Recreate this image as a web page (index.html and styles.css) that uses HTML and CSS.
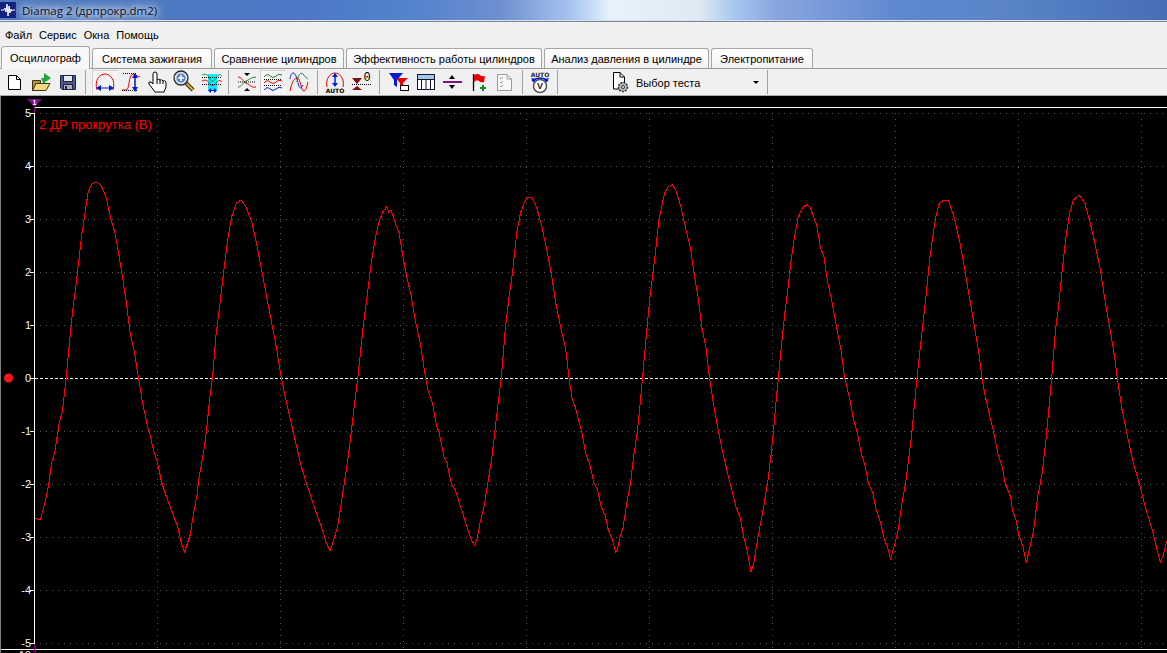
FILE: index.html
```html
<!DOCTYPE html>
<html>
  <head>
    <title>Diamag 2</title>
    <link rel="stylesheet" href="styles.css">
  </head>
  <body>
    <div class="window">
      <div class="titlebar">
        <svg class="app-icon" width="16" height="16" viewBox="0 0 16 16">
          <rect width="16" height="16" fill="#12237c"/>
          <path d="M1 8H4L5 6 6 10 7 2 8 14 9 4 10 11 11 7 12 9 13 8H15" fill="none" stroke="#fff"/>
        </svg>
        <span class="app-title">Diamag 2 (дрпрокр.dm2)</span>
      </div>
      <div class="menu">
        <span>Файл</span>
        <span>Сервис</span>
        <span>Окна</span>
        <span>Помощь</span>
      </div>
      <div class="tabs">
        <div class="tab tab-active">Осциллограф</div>
        <div class="tab">Система зажигания</div>
        <div class="tab">Сравнение цилиндров</div>
        <div class="tab">Эффективность работы цилиндров</div>
        <div class="tab">Анализ давления в цилиндре</div>
        <div class="tab">Электропитание</div>
      </div>
      <div class="toolbar">
        <div class="group group-file">
          <div class="btn btn-wide">
            <svg width="24" height="24" viewBox="0 0 24 24">
              <path d="M6.500 5.500H14.500L18.500 9.500V19.500H6.500Z" fill="#fff" stroke="#000"/>
              <path d="M14.500 5.500V9.500H18.500" fill="none" stroke="#000"/>
            </svg>
          </div>
          <div class="btn btn-wide">
            <svg width="24" height="24" viewBox="0 0 24 24">
              <path d="M3.500 20.500V10.500H11.500V20.500Z" fill="#b59433" stroke="#3c3310"/>
              <path d="M3.500 20.500L7 13.500H21L17 20.500Z" fill="#f2d77c" stroke="#3c3310"/>
              <path d="M15 3L22 8 15 13Z" fill="#23a63b"/>
              <path d="M12 8H16V13H14Z" fill="#23a63b"/>
            </svg>
          </div>
          <div class="btn btn-wide">
            <svg width="24" height="24" viewBox="0 0 24 24">
              <path d="M4.500 5.500H19.500V19.500H6L4.500 18Z" fill="#4c5a86" stroke="#1d2340"/>
              <rect x="7.500" y="5.500" width="9" height="6" fill="#e6e6ee" stroke="#1d2340"/>
              <rect x="7.500" y="14.500" width="9" height="5" fill="#a9adbd" stroke="#1d2340"/>
              <rect x="9" y="16" width="2" height="3" fill="#1d2340"/>
            </svg>
          </div>
        </div>
        <div class="group group-view">
          <div class="btn btn-pressed">
            <svg width="24" height="24" viewBox="0 0 24 24">
              <path d="M4 20C1 10 7 4 12 4S23 10 20 20" fill="none" stroke="#e60000"/>
              <path d="M5 18H19" stroke="#0018d8"/>
              <path d="M8 15L3 18 8 21ZM16 15L21 18 16 21Z" fill="#0018d8"/>
            </svg>
          </div>
          <div class="btn">
            <svg width="24" height="24" viewBox="0 0 24 24">
              <path d="M3 20H7C11 20 9 5 14 4L21 7" fill="none" stroke="#e60000"/>
              <path d="M4 3.500H17M3 20.500H18" stroke="#000" stroke-dasharray="1 1"/>
              <path d="M16 6V18" stroke="#0018d8" stroke-width="1.500"/>
              <path d="M16 3L13 8H19ZM16 22L13 17H19Z" fill="#0018d8"/>
            </svg>
          </div>
          <div class="btn">
            <svg width="24" height="24" viewBox="0 0 24 24">
              <path d="M10 22L4 14Q3 11 6 12L8 14V4Q8 2 10 2T12 4V10Q14 8 15 10 17 9 18 11 20 10 21 12V17L19 22Z" fill="#fff" stroke="#000"/>
              <path d="M12 10V14M15 10V14M18 11V14" stroke="#000"/>
            </svg>
          </div>
          <div class="btn">
            <svg width="24" height="24" viewBox="0 0 24 24">
              <path d="M15 13L22 20" stroke="#3a2f10" stroke-width="4"/>
              <path d="M15.500 13.500L22 20" stroke="#d8ad3c" stroke-width="2"/>
              <circle cx="10" cy="8" r="7" fill="#d8e2f2" stroke="#2a2a2a" stroke-width="1.300"/>
              <circle cx="10" cy="8" r="4.500" fill="#5c80c6"/>
              <path d="M7 8H13M10 5V11" stroke="#fff" stroke-width="1.600"/>
            </svg>
          </div>
          <div class="btn">
            <svg width="24" height="24" viewBox="0 0 24 24">
              <rect x="11" y="4" width="9" height="16" fill="#00f0ff"/>
              <path d="M5 5C9 3 11 5 13 9 14 12 17 12 19 8 21 4 23 4 25 6" fill="none" stroke="#138a2c"/>
              <path d="M5 11C9 9 11 11 13 14 15 17 18 15 20 12 22 10 23 10 25 12" fill="none" stroke="#e60000"/>
              <path d="M5 7.500H25M5 14.500H25" stroke="#000" stroke-dasharray="1 1"/>
              <path d="M12 20.500H19" stroke="#0018d8"/>
              <path d="M14 18L11 20.500 14 23ZM17 18L20 20.500 17 23Z" fill="#0018d8"/>
            </svg>
          </div>
        </div>
        <div class="group group-scope">
          <div class="btn">
            <svg width="24" height="24" viewBox="0 0 24 24">
              <path d="M3 7C7 7 8 12 11 13S16 18 21 17" fill="none" stroke="#e60000"/>
              <path d="M3 17C7 17 8 12 11 11S16 7 21 7" fill="none" stroke="#138a2c"/>
              <path d="M3 12H21" stroke="#000" stroke-dasharray="1 1"/>
              <path d="M9 3H15L12 6ZM9 21H15L12 18Z" fill="#000"/>
            </svg>
          </div>
          <div class="btn btn-pressed">
            <svg width="24" height="24" viewBox="0 0 24 24">
              <path d="M3 7Q6 3 9 6T15 6 21 5" fill="none" stroke="#138a2c"/>
              <path d="M3 13Q6 9 9 12T15 12 21 11" fill="none" stroke="#e60000"/>
              <path d="M3 20Q6 16 9 19T15 19 21 18" fill="none" stroke="#0018d8"/>
              <path d="M3 9.500H21M3 15.500H21" stroke="#000" stroke-dasharray="1 1"/>
            </svg>
          </div>
          <div class="btn">
            <svg width="24" height="24" viewBox="0 0 24 24">
              <path d="M3 9C4 1 8 1 10 9S13 21 16 15" fill="none" stroke="#0018d8"/>
              <path d="M3 21C4 16 6 8 10 8S14 22 17 21 20 14 21 12" fill="none" stroke="#e60000"/>
              <path d="M10 12C11 4 14 2 16 4S19 8 21 9" fill="none" stroke="#138a2c"/>
            </svg>
          </div>
        </div>
        <div class="group group-scale">
          <div class="btn">
            <svg width="24" height="24" viewBox="0 0 24 24">
              <path d="M4 17C2 8 8 3 12 3S22 8 20 17" fill="none" stroke="#e60000"/>
              <path d="M12 6V14" stroke="#0018d8" stroke-width="1.500"/>
              <path d="M12 3L9 7H15ZM12 17L9 13H15Z" fill="#0018d8"/>
              <text class="icon-auto" x="12" y="23">AUTO</text>
            </svg>
          </div>
          <div class="btn">
            <svg width="24" height="24" viewBox="0 0 24 24">
              <path d="M3 8H13L8 14ZM3 20H13L8 16Z" fill="#7a1212"/>
              <path d="M3 14.500H22" stroke="#000" stroke-dasharray="1 1"/>
              <text class="icon-zero" x="18" y="11">0</text>
            </svg>
          </div>
        </div>
        <div class="group group-tools">
          <div class="btn">
            <svg width="24" height="24" viewBox="0 0 24 24">
              <path d="M1 3H15L9 10V17L6 15V10Z" fill="#0018d8"/>
              <path d="M8 8H20L15 13V18L12 16V13Z" fill="#e60000"/>
              <rect x="12.500" y="15.500" width="8" height="5" fill="#fff" stroke="#000"/>
            </svg>
          </div>
          <div class="btn">
            <svg width="24" height="24" viewBox="0 0 24 24">
              <rect x="3.500" y="4.500" width="17" height="15" fill="#fff" stroke="#10142e"/>
              <rect x="4" y="5" width="16" height="4" fill="#a8c6e8"/>
              <path d="M3 9.500H21M7.500 9V19M12 9V19M16.500 9V19" stroke="#10142e"/>
            </svg>
          </div>
          <div class="btn">
            <svg width="24" height="24" viewBox="0 0 24 24">
              <path d="M3 12H22" stroke="#7a1282" stroke-width="2"/>
              <path d="M12 5L9 9H15ZM12 19L9 15H15Z" fill="#000"/>
            </svg>
          </div>
          <div class="btn">
            <svg width="24" height="24" viewBox="0 0 24 24">
              <path d="M7.500 4V21" stroke="#000" stroke-width="1.300"/>
              <path d="M8 5Q12 3 14 5T19 6L18 12Q15 13 13 11T8 12Z" fill="#e60000"/>
              <path d="M17 15V21M14 18H20" stroke="#0b8a2a" stroke-width="2"/>
            </svg>
          </div>
          <div class="btn">
            <svg width="24" height="24" viewBox="0 0 24 24">
              <path d="M5.500 4.500H15L19.500 9V20.500H5.500Z" fill="#f8f8f8" stroke="#9a9a9a"/>
              <path d="M15 4.500V9H19.500" fill="none" stroke="#9a9a9a"/>
              <path d="M8 8L9 9 11 7M8 12L9 13 11 11M8 16L9 17 11 15" fill="none" stroke="#9a9a9a"/>
            </svg>
          </div>
        </div>
        <div class="group group-auto">
          <div class="btn">
            <svg width="24" height="24" viewBox="0 0 24 24">
              <text class="icon-auto icon-auto-top" x="12" y="7">AUTO</text>
              <path d="M4 11Q12 5 20 11" fill="none" stroke="#0018d8" stroke-width="1.500"/>
              <path d="M3 8L6 13 8 9ZM21 8L18 13 16 9Z" fill="#0018d8"/>
              <circle cx="12" cy="16" r="6.500" fill="#fff" stroke="#555" stroke-width="1.500"/>
              <text class="icon-volt" x="12" y="19">V</text>
            </svg>
          </div>
        </div>
        <div class="group group-test">
          <svg width="18" height="22" viewBox="0 0 18 22">
            <path d="M1.500 1.500H8L12.500 6V18H1.500Z" fill="#fff" stroke="#000"/>
            <path d="M8 1.500V6H12.500" fill="none" stroke="#000"/>
            <circle cx="11" cy="16" r="4.500" fill="#b9b9b9" stroke="#333" stroke-width="1.500" stroke-dasharray="2 1"/>
            <circle cx="11" cy="16" r="1.500" fill="#fff" stroke="#333"/>
          </svg>
          <span class="test-label">Выбор теста</span>
          <span class="test-arrow"></span>
        </div>
      </div>
      <div class="plot">
        <svg class="scope" width="1167" height="557" viewBox="0 96 1167 557">
          <g class="grid">
            <path d="M34 113.500H1167M34 166.500H1167M34 219.500H1167M34 272.500H1167M34 325.500H1167M34 431.500H1167M34 484.500H1167M34 537.500H1167M34 590.500H1167M34 643.500H1167"/>
            <path d="M157.500 113V649M280.500 113V649M403.500 113V649M526.500 113V649M649.500 113V649M772.500 113V649M895.500 113V649M1018.500 113V649M1141.500 113V649"/>
          </g>
          <path class="axis" d="M34 107.500H1167M34.500 107V649M0 649.500H1167"/>
          <path class="ticks" d="M30 113.500H34M30 166.500H34M30 219.500H34M30 272.500H34M30 325.500H34M30 378.500H34M30 431.500H34M30 484.500H34M30 537.500H34M30 590.500H34M30 643.500H34"/>
          <path class="zero-line" d="M35 378.500H1167"/>
          <path class="marker-line" d="M34.500 99V113M34.500 644V653"/>
          <path class="marker" d="M27 99H42L34.500 107Z"/>
          <text class="marker-label" x="34.500" y="105">1</text>
          <g class="scale">
            <text x="31" y="117">5</text>
            <text x="31" y="170">4</text>
            <text x="31" y="223">3</text>
            <text x="31" y="276">2</text>
            <text x="31" y="329">1</text>
            <text x="31" y="382">0</text>
            <text x="31" y="435">-1</text>
            <text x="31" y="488">-2</text>
            <text x="31" y="541">-3</text>
            <text x="31" y="594">-4</text>
            <text x="31" y="647">-5</text>
            <text x="31" y="659">-10</text>
          </g>
          <circle class="channel-dot" cx="8.500" cy="378" r="4.500"/>
          <text class="channel-name" x="39" y="129">2 ДР прокрутка (В)</text>
          <polyline class="trace" points="35,518 40,520 43,510 46.700,495 49,482 51.700,462 54.700,453 57.400,435 59.300,422 62.400,412 65,388 66.200,378 69.700,340 72.700,310 75.400,290 78.500,263 81.500,237 85,213 88,193 91.800,184 96.800,182 101.400,186 106.400,198 111,220 114.800,232 118.600,253 122.500,277 126.300,302 130,332 134,350 138.500,378 142.400,402 147.300,425 150,435 154.200,453 157.700,463 161.500,482 166.500,497 172.200,512 178,528 181.800,545 184.500,552 187.500,543 190.200,535 193.300,515 197,495 199,478 201.700,463 204.700,445 207.400,422 209.300,402 212.400,378 216.200,333 220,303 223.900,270 227.700,240 231.500,217 236.500,203 241,200 245.700,206 251.800,222 256.400,243 262,272 266.700,297 271.700,323 276.300,347 281.300,378 287,405 294,435 300.400,463 306,482 312,500 317.700,517 321.500,527 326,542 330,551 333.700,540 337.500,527 340.600,508 344.400,482 347.500,462 350.600,438 354,408 357.800,378 362.800,330 366.600,300 371.200,263 375,240 378.900,222 382.700,212 386.500,207 388.800,212 391,210 394.200,220 398.800,232 402.600,255 406.400,275 411.400,297 415.200,320 420.200,343 425.600,378 427.900,390 432.500,403 436.300,425 439.300,433 444,457 447,463 451.600,485 455.400,490 461,508 467,527 471.500,540 474.500,545 476.800,540 480.300,522 484,507 488,482 491.800,458 495.600,425 498.700,398 501.300,378 505.200,330 509,297 512.800,270 516.700,233 520.500,213 524.300,202 528,197 532,198 536.500,207 541.500,225 546.500,248 551.900,277 555.700,303 560.600,327 565.600,348 569,378 572,398 575.200,407 581.800,432 585.600,453 590,465 593.900,483 597.600,490 601.300,507 605,515 608.800,532 611.800,537 615.600,552 617.400,550 620,537 623,528 626.800,503 630.500,483 633.500,458 637.300,432 640,405 642.500,378 645.500,345 648,317 650,297 653,273 656,247 658.600,222 661.600,207 664.600,193 668,187 672.500,185 676.600,192 681,207 685.600,228 690.400,248 694,273 698,297 701.700,327 706,348 709.500,378 714,407 717.800,428 722.300,450 726.800,470 730.500,485 736,507 740,517 744,538 747.700,553 751,572 754,562 757.800,538 763.500,508 768.300,478 771,455 774,425 776.600,395 778.400,378 782,340 784.800,313 787.800,290 791.500,257 794.500,237 798.300,217 802.800,207 806.500,205 810,207 816.600,225 820.400,247 824,257 827.800,283 831.600,300 836.500,327 841,350 844.700,378 849.600,398 853.300,418 857.800,435 861.500,455 864.500,463 868.300,483 872.800,493 875.800,508 880.600,523 884,538 887.700,548 890.400,559 893.700,548 898.200,530 902,503 905.700,482 908.700,458 911.300,438 913.200,418 917,378 920,350 923.300,320 926.300,293 929.300,263 932.700,237 935.700,217 939.400,203 943.900,200 948.800,201 954.400,218 960,243 964.900,270 969.400,297 973.900,323 978.700,352 982,378 985,395 990,417 993.700,432 997.500,452 1002.300,467 1005,483 1010.600,497 1012.400,510 1016,520 1018.800,535 1022.500,545 1026.300,563 1030.400,545 1033.700,530 1037.500,498 1042.400,472 1045.400,445 1048,418 1051.700,378 1055.500,330 1058.500,307 1062.200,270 1065.600,240 1069.300,215 1073.400,200 1079,195 1084.700,203 1090,222 1094.800,243 1100.400,270 1105,300 1109.800,328 1114.600,357 1117.300,378 1121.700,408 1126.600,432 1130.400,450 1134.800,468 1139.700,485 1145.300,507 1152.800,532 1156.600,548 1160.300,562 1163.300,555 1166.700,541"/>
        </svg>
      </div>
    </div>
  </body>
</html>
```

FILE: styles.css
```css
html,
body {
  margin: 0;
  height: 100%;
  overflow: hidden;
}

body {
  font-family: "Liberation Sans", Arial, sans-serif;
  font-size: 11px;
  color: #000000;
  background-color: #f0f0f0;
}

.window {
  display: flex;
  flex-direction: column;
  height: 653px;
}

.titlebar {
  display: flex;
  align-items: center;
  height: 20px;
  flex-shrink: 0;
  border-bottom: 1px solid #d7e3f2;
  box-shadow: 0 1px 0 #7c8796;
  background: linear-gradient(
    90deg,
    #5078bd 0,
    #4c78c6 300px,
    #5583cc 420px,
    #6d8fd0 500px,
    #a6c2ee 570px,
    #e6f2fc 610px,
    #e0e9f3 700px,
    #a6c6ee 735px,
    #8aa6e0 775px,
    #5d87cf 900px,
    #5b85c8 1000px,
    #456eb7 1167px
  );
}

.app-icon {
  flex-shrink: 0;
}

.app-title {
  margin-left: 6px;
  font-family: "Open Sans", sans-serif;
  font-size: 11.500px;
  color: #0c1222;
  text-shadow: 0 0 6px #ffffff, 0 0 10px #ffffff, 0 0 14px #e6eefa;
}

.menu {
  display: flex;
  align-items: center;
  column-gap: 7px;
  box-sizing: border-box;
  height: 24px;
  padding: 2px 0 0 5px;
  flex-shrink: 0;
  margin-top: 1px;
}

.tabs {
  display: flex;
  align-items: flex-end;
  column-gap: 2px;
  height: 22px;
  padding-left: 1px;
  flex-shrink: 0;
  border-bottom: 1px solid #999999;
}

.tab {
  display: flex;
  align-items: center;
  justify-content: center;
  box-sizing: border-box;
  height: 20px;
  border: 1px solid #a5a5a5;
  border-bottom: none;
  border-radius: 3px 3px 0 0;
  background: linear-gradient(#ffffff, #f2f2f2);
}

.tab:nth-child(1) {
  width: 89px;
}

.tab:nth-child(2) {
  width: 120px;
}

.tab:nth-child(3) {
  width: 130px;
}

.tab:nth-child(4) {
  width: 196px;
}

.tab:nth-child(5) {
  width: 165px;
}

.tab:nth-child(6) {
  width: 102px;
}

.tab-active {
  height: 23px;
  margin-bottom: -1px;
  background: #f7f7f7;
  position: relative;
}

.toolbar {
  display: flex;
  column-gap: 2px;
  height: 26px;
  flex-shrink: 0;
  border-bottom: 1px solid #a8a8a8;
  padding-left: 1px;
}

.group {
  display: flex;
  align-items: center;
  justify-content: center;
  box-sizing: border-box;
  border-right: 1px solid #a0a0a0;
  margin-top: 1px;
  margin-bottom: 1px;
}

.group-file {
  width: 85px;
  padding-right: 4px;
}

.group-view {
  width: 141px;
  padding-right: 3px;
}

.group-scope {
  width: 87px;
  padding-right: 2px;
}

.group-scale {
  width: 60px;
  padding-right: 3px;
}

.group-tools {
  width: 141px;
}

.group-auto {
  width: 33px;
  padding-right: 2px;
}

.group-test {
  width: 208px;
  justify-content: flex-start;
  padding-left: 52px;
}

.btn {
  display: flex;
  align-items: center;
  justify-content: center;
  width: 26px;
  height: 24px;
}

.btn svg {
  overflow: visible;
}

.btn-wide {
  width: 27px;
}

.btn-pressed {
  background-color: #ffffff;
  background-image: repeating-conic-gradient(#ececec 0 25%, #ffffff 0 50%);
  background-size: 2px 2px;
  box-shadow: inset 1px 1px 0 #d0d0d0;
}

.icon-auto {
  font-family: "DejaVu Sans", sans-serif;
  font-size: 6px;
  font-weight: bold;
  text-anchor: middle;
  fill: #000000;
}

.icon-auto-top {
  fill: #1d2340;
}

.icon-zero {
  font-family: "Liberation Mono", monospace;
  font-size: 12px;
  text-anchor: middle;
  fill: #000000;
}

.icon-volt {
  font-family: "Liberation Sans", sans-serif;
  font-size: 9px;
  font-weight: bold;
  text-anchor: middle;
  fill: #1d2340;
}

.test-label {
  margin: 2px 0 0 6px;
}

.test-arrow {
  margin-left: auto;
  margin-right: 8px;
  border-left: 3px solid transparent;
  border-right: 3px solid transparent;
  border-top: 3px solid #000000;
}

.plot {
  flex: 1;
  min-height: 0;
  background-color: #000000;
  border-left: 1px solid #808080;
  overflow: hidden;
}

.scope {
  display: block;
  margin-left: -1px;
}

.grid path {
  fill: none;
  stroke: #5a5a5a;
  stroke-dasharray: 1 5;
}

.axis,
.ticks {
  fill: none;
  stroke: #ffffff;
  shape-rendering: crispEdges;
}

.zero-line {
  fill: none;
  stroke: #ffffff;
  stroke-dasharray: 3 2;
  shape-rendering: crispEdges;
}

.marker-line {
  fill: none;
  stroke: #8a0a8a;
  shape-rendering: crispEdges;
}

.marker {
  fill: #7d1187;
}

.marker-label {
  font-size: 7px;
  font-weight: bold;
  text-anchor: middle;
  fill: #ffffff;
}

.scale text {
  font-size: 11px;
  text-anchor: end;
  fill: #f4f8ff;
}

.channel-dot {
  fill: #ff1515;
}

.channel-name {
  font-size: 13px;
  fill: #ff0000;
}

.trace {
  fill: none;
  stroke: #ff0000;
  stroke-width: 1;
  shape-rendering: crispEdges;
}
```
